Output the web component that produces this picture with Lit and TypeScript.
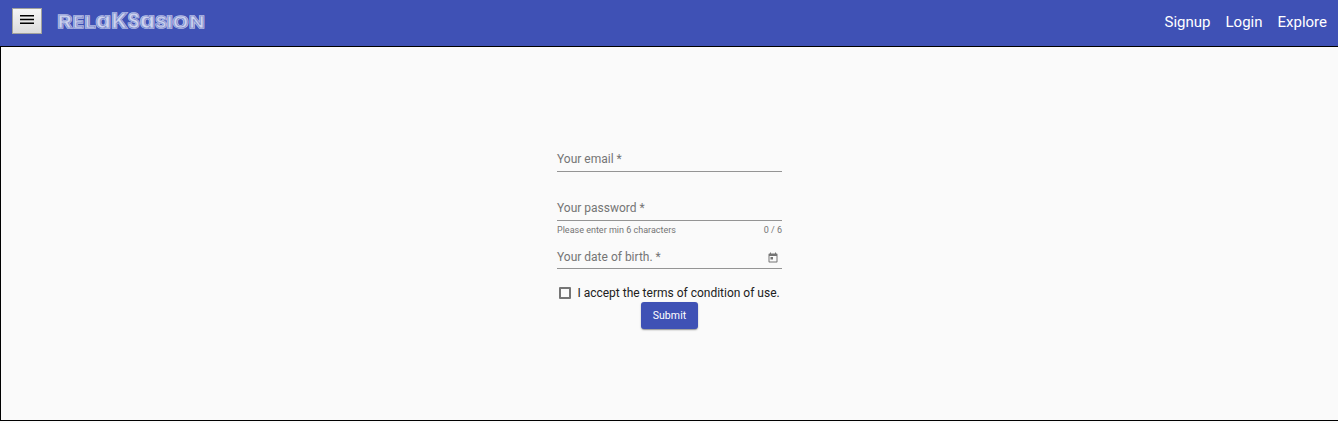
import { LitElement, html, svg, css } from "lit";
import { customElement } from "lit/decorators.js";

// glyph, left edge, width, font size
const LETTERS: [string, number, number, number][] = [
  ["R", 0.4, 14.4, 18], ["E", 16, 10.6, 15.4], ["L", 27.8, 10.6, 15.4], ["a", 38.8, 15, 20.5],
  ["K", 54.4, 15.6, 19.5], ["S", 70.8, 11.6, 19.5], ["a", 83, 14.8, 20.5], ["S", 98.4, 11, 15.4],
  ["I", 109.4, 6, 15.4], ["O", 115.8, 15.4, 15.4], ["N", 132.2, 15.2, 15.4],
];

@customElement("brand-logo")
export class BrandLogo extends LitElement {
  static styles = css`
    :host { display: block; width: 150px; height: 20px; }
    svg { display: block; overflow: visible; }
    text { font-family: Inter, Roboto, sans-serif; font-weight: 700; font-feature-settings: "cv11"; stroke-linejoin: miter; }
    .outer { fill: #d0d5f0; stroke: #c6cdec; stroke-width: 1.7px; }
    .gap { fill: none; stroke: #7482cb; stroke-width: .6px; }
  `;
  render() {
    return html`<svg width="150" height="20" viewBox="0 0 150 20" role="img">
      ${LETTERS.map(([c, x, w, size]) => ["outer", "gap"].map((k) => svg`
        <text class=${k} x=${x} y="16.3" font-size=${size} textLength=${w} lengthAdjust="spacingAndGlyphs">${c}</text>`))}
    </svg>`;
  }
}

@customElement("app-root")
export class AppRoot extends LitElement {
  static styles = css`
    :host { display: block; height: 423px; overflow: hidden; background: #fafafa; font-family: Roboto, sans-serif; }
    * { box-sizing: border-box; }
    header { height: 46px; background: #3f51b5; display: flex; align-items: flex-start; padding: 8px 11px 0 12px; }
    .menu { width: 30px; height: 26px; padding: 0; border: 1px solid #a2a29c; background: linear-gradient(#f5f5f5, #dcdcdc); display: grid; place-items: start center; }
    brand-logo { margin: 4px 0 0 15px; }
    nav { margin-left: auto; display: flex; gap: 15px; color: #fff; font-size: 15px; line-height: 28px; }
    main { height: 375px; border: 1px solid #000; border-right: 0; display: flex; justify-content: center; padding-top: 99px; }
    form { width: 225px; font-size: 12px; color: #757575; }
    .field { height: 26px; border-bottom: 1px solid #949494; display: flex; justify-content: space-between; line-height: 26px; }
    .password { margin-top: 23px; }
    .hint { display: flex; justify-content: space-between; font-size: 9px; line-height: 11px; padding-top: 4px; height: 22px; }
    .date { line-height: 28px; }
    .icon { margin: 9px 3px 0 0; }
    .terms { display: flex; align-items: center; height: 14px; margin-top: 17px; padding-left: 2px; color: #212121; white-space: nowrap; }
    .box { width: 12px; height: 12px; border: 2px solid #757575; border-radius: 1px; margin-right: 6.4px; }
    .submit { display: block; margin: 2px auto 0; width: 57px; height: 27px; padding: 0; border: 0; border-radius: 3px; background: #3f51b5; color: #fff; font: 400 10.5px/27px Roboto, sans-serif; letter-spacing: .1px; box-shadow: 0 2px 1px -1px #0003, 0 1px 2px #0004; }
  `;
  render() {
    return html`
      <header>
        <button class="menu" aria-label="Menu">
          <svg width="14" height="18" viewBox="0 0 14 18"><path d="M0 6h14v1.5H0zM0 9.75h14v1.5H0zM0 13.5h14V15H0z"/></svg>
        </button>
        <brand-logo></brand-logo>
        <nav><span>Signup</span><span>Login</span><span>Explore</span></nav>
      </header>
      <main>
        <form>
          <div class="field"><span>Your email *</span></div>
          <div class="field password"><span>Your password *</span></div>
          <div class="hint"><span>Please enter min 6 characters</span><span>0 / 6</span></div>
          <div class="field date"><span>Your date of birth. *</span>
            <svg class="icon" width="12" height="12" viewBox="0 0 24 24" fill="#757575"><path d="M19 3h-1V1h-2v2H8V1H6v2H5c-1.1 0-2 .9-2 2v14c0 1.1.9 2 2 2h14c1.1 0 2-.9 2-2V5c0-1.1-.9-2-2-2zm0 16H5V8h14v11zM7 10h5v5H7z"/></svg>
          </div>
          <div class="terms"><span class="box"></span><span>I accept the terms of condition of use.</span></div>
          <button type="button" class="submit">Submit</button>
        </form>
      </main>`;
  }
}
